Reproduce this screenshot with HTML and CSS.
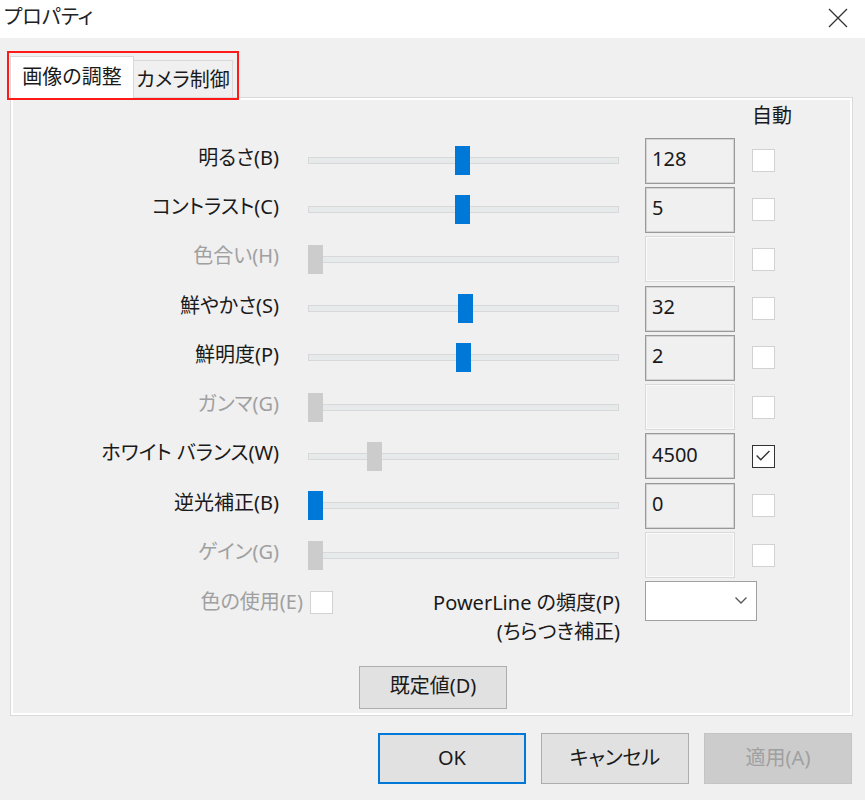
FILE: index.html
```html
<!DOCTYPE html>
<html lang="ja">
<head>
<meta charset="utf-8">
<title>プロパティ</title>
<link rel="stylesheet" href="styles.css">
</head>
<body>
<div class="titlebar">
  <span class="title">プロパティ</span>
  <svg class="close" viewBox="0 0 20 20" width="20" height="20"><path d="M1 1 L19 19 M19 1 L1 19" stroke="#333" stroke-width="1.3" fill="none"/></svg>
</div>
<div class="tabstrip">
  <div class="tab active">画像の調整</div>
  <div class="tab">カメラ制御</div>
  <div class="annot"></div>
</div>
<div class="panel">
  <div class="hdr"><span class="hdr-text">自動</span></div>

  <div class="row">
    <div class="label">明るさ(B)</div>
    <div class="slider"><div class="track"></div><div class="thumb" style="left:147px"></div></div>
    <div class="box">128</div>
    <div class="cb"></div>
  </div>
  <div class="row">
    <div class="label">コントラスト(C)</div>
    <div class="slider"><div class="track"></div><div class="thumb" style="left:147px"></div></div>
    <div class="box">5</div>
    <div class="cb"></div>
  </div>
  <div class="row disabled">
    <div class="label">色合い(H)</div>
    <div class="slider"><div class="track"></div><div class="thumb off" style="left:0px"></div></div>
    <div class="box off"></div>
    <div class="cb"></div>
  </div>
  <div class="row">
    <div class="label">鮮やかさ(S)</div>
    <div class="slider"><div class="track"></div><div class="thumb" style="left:150px"></div></div>
    <div class="box">32</div>
    <div class="cb"></div>
  </div>
  <div class="row">
    <div class="label">鮮明度(P)</div>
    <div class="slider"><div class="track"></div><div class="thumb" style="left:148px"></div></div>
    <div class="box">2</div>
    <div class="cb"></div>
  </div>
  <div class="row disabled">
    <div class="label">ガンマ(G)</div>
    <div class="slider"><div class="track"></div><div class="thumb off" style="left:0px"></div></div>
    <div class="box off"></div>
    <div class="cb"></div>
  </div>
  <div class="row">
    <div class="label">ホワイト バランス(W)</div>
    <div class="slider"><div class="track"></div><div class="thumb off" style="left:59px"></div></div>
    <div class="box">4500</div>
    <div class="cb checked"><svg viewBox="0 0 23 23" width="21" height="21"><path d="M4 10.5 L8.5 15 L18 5.5" stroke="#333" stroke-width="1.5" fill="none"/></svg></div>
  </div>
  <div class="row">
    <div class="label">逆光補正(B)</div>
    <div class="slider"><div class="track"></div><div class="thumb" style="left:0px"></div></div>
    <div class="box">0</div>
    <div class="cb"></div>
  </div>
  <div class="row disabled">
    <div class="label">ゲイン(G)</div>
    <div class="slider"><div class="track"></div><div class="thumb off" style="left:0px"></div></div>
    <div class="box off"></div>
    <div class="cb"></div>
  </div>

  <div class="extra">
    <div class="coloruse">
      <span class="muted">色の使用(E)</span>
      <div class="cb"></div>
    </div>
    <div class="powerline">PowerLine の頻度(P)<br>(ちらつき補正)</div>
    <div class="dropdown"><svg viewBox="0 0 12 7" width="12" height="7"><path d="M0.5 0.5 L6 6 L11.5 0.5" stroke="#555" stroke-width="1.3" fill="none"/></svg></div>
  </div>
  <div class="defaults"><div class="btn">既定値(D)</div></div>
</div>
<div class="footer">
  <div class="btn big primary">OK</div>
  <div class="btn big">キャンセル</div>
  <div class="btn big inactive">適用(A)</div>
</div>
</body>
</html>
```

FILE: styles.css
```css
* { box-sizing: border-box; }
html, body { margin: 0; padding: 0; }
body {
  width: 865px;
  height: 800px;
  overflow: hidden;
  background: #f0f0f0;
  font-family: "Noto Sans", "Noto Sans CJK JP", sans-serif;
  font-size: 20px;
  line-height: 1;
  color: #1a1a1a;
  font-feature-settings: "palt";
}

.titlebar {
  height: 38px;
  background: #fff;
  display: flex;
  align-items: center;
  justify-content: space-between;
  padding-left: 4px;
  padding-right: 17px;
}
.title { margin-top: -4px; color: #222; }
.close { margin-top: -2px; }

.tabstrip {
  position: relative;
  height: 59px;
  display: flex;
  align-items: flex-end;
  padding-left: 10px;
}
.tab {
  display: flex;
  align-items: center;
  justify-content: center;
  width: 99px;
  height: 37px;
  border: 1px solid #d9d9d9;
  border-bottom: none;
  border-left: none;
  background: #f0f0f0;
  padding-top: 1px;
}
.tab.active {
  width: 124px;
  height: 42px;
  margin-bottom: -1px;
  background: #fff;
  border-left: 1px solid #d9d9d9;
  position: relative;
  z-index: 1;
  padding-top: 0;
  padding-bottom: 2px;
}
.annot {
  position: absolute;
  left: 7px;
  top: 13px;
  width: 232px;
  height: 49px;
  border: 2px solid #ff1a1a;
  z-index: 2;
  pointer-events: none;
}

.panel {
  margin-left: 10px;
  width: 843px;
  height: 619px;
  border: 1px solid #dadada;
  background: #f0f0f0;
  box-shadow: inset 0 0 0 2px #fff;
}
.hdr {
  height: 38px;
  padding-left: 741px;
  padding-top: 8px;
}
.hdr-text { white-space: nowrap; }

.row {
  display: grid;
  grid-template-columns: 297px 337px 107px 23px;
  height: 49.3px;
  align-items: center;
}
.label {
  text-align: right;
  padding-right: 29px;
  padding-bottom: 6px;
  white-space: nowrap;
}
.disabled .label, .muted { color: #a0a0a0; }

.slider {
  position: relative;
  width: 311px;
  height: 29px;
  display: flex;
  align-items: center;
}
.track {
  width: 100%;
  height: 7px;
  background: #e7eaea;
  border: 1px solid #d8d8d8;
}
.thumb {
  position: absolute;
  top: 0;
  width: 15px;
  height: 29px;
  background: #0078d7;
}
.thumb.off { background: #cccccc; }

.box {
  width: 90px;
  height: 46px;
  border: 1px solid #999;
  box-shadow: inset 0 0 0 1px #d4d4d4;
  background: #f0f0f0;
  display: flex;
  align-items: center;
  padding-left: 6px;
  padding-bottom: 3px;
}
.box.off {
  border-color: #dadada;
  box-shadow: inset 0 0 0 1px #fafafa;
}

.cb {
  width: 23px;
  height: 23px;
  background: #fff;
  border: 1px solid #d2d2d2;
  display: flex;
  align-items: center;
  justify-content: center;
}
.cb.checked { border-color: #333; }

.extra {
  display: flex;
  align-items: flex-start;
  height: 85px;
  margin-top: 1px;
}
.coloruse {
  width: 322px;
  height: 40px;
  padding-top: 3px;
  display: flex;
  justify-content: flex-end;
  align-items: center;
  gap: 7px;
}
.powerline {
  width: 287px;
  text-align: right;
  line-height: 29px;
  padding-top: 7px;
  white-space: nowrap;
}
.dropdown {
  margin-left: 25px;
  width: 112px;
  height: 40px;
  background: #fff;
  border: 1px solid #a0a0a0;
  display: flex;
  justify-content: flex-end;
  align-items: center;
  padding-right: 9px;
}

.defaults { padding-left: 348px; }
.btn {
  width: 148px;
  height: 43px;
  background: #e1e1e1;
  border: 1px solid #adadad;
  display: flex;
  align-items: center;
  justify-content: center;
  padding-bottom: 2px;
}

.footer {
  display: flex;
  justify-content: flex-end;
  gap: 15px;
  padding-right: 13px;
  margin-top: 17px;
}
.btn.big { height: 51px; }
.btn.primary { border: 2px solid #0078d7; }
.btn.inactive {
  background: #cccccc;
  border-color: #c4c4c4;
  color: #a0a0a0;
}
```
